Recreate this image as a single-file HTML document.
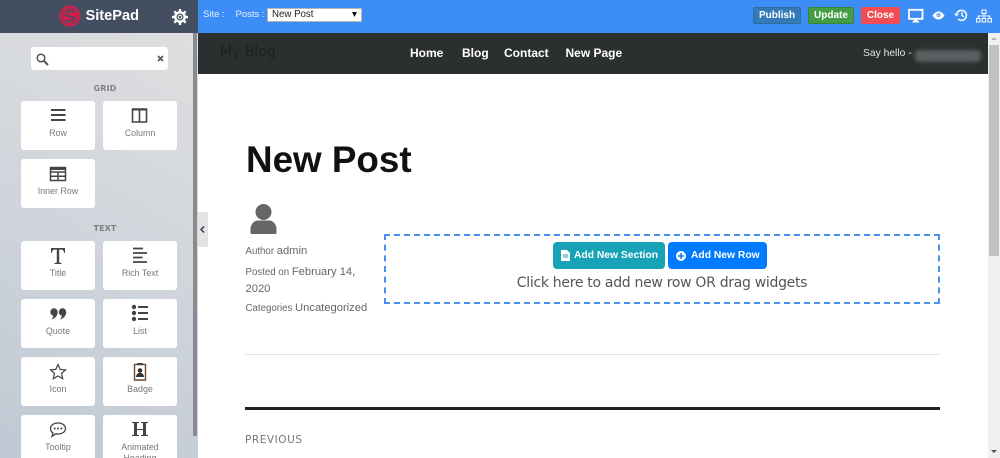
<!DOCTYPE html>
<html><head><meta charset="utf-8"><style>
html,body{margin:0;padding:0;width:1000px;height:458px;overflow:hidden;background:#fff}
*{box-sizing:border-box}
.a{position:absolute;white-space:nowrap}
body{font-family:"Liberation Sans","DejaVu Sans",sans-serif;position:relative}
#side{position:absolute;left:0;top:33px;width:198px;height:425px;background:linear-gradient(30deg,#bfc8d3 0%,#d0d5dc 50%,#dededf 100%)}
.card{position:absolute;width:74px;height:49px;background:#fff;border-radius:3px}
.card span{position:absolute;left:0;right:0;text-align:center;top:27px;font:8.900px/11px "Liberation Sans",sans-serif;color:#777;white-space:nowrap}
.card svg{position:absolute;left:25px;top:5px}
.sec{position:absolute;left:0;width:210px;text-align:center;font:bold 8px/10px "DejaVu Sans",sans-serif;color:#808080;letter-spacing:.1px}
.btn{position:absolute;top:7px;height:17px;border-radius:2px;color:#fff;font:bold 10px/16px "Liberation Sans",sans-serif;text-align:center}
.nav{position:absolute;top:46px;color:#fff;font:bold 12px/15px "Liberation Sans",sans-serif;white-space:nowrap}
.g{color:#666;font:9.700px/14px "Liberation Sans",sans-serif;white-space:nowrap;position:absolute}
.g b{font-weight:normal;font-size:11.200px}
</style></head><body>
<div class="a" style="left:0;top:0;width:198px;height:33px;background:#434f60"></div>
<svg class="a" style="left:59px;top:5px" width="22" height="22" viewBox="0 0 22 22"><circle cx="11" cy="11" r="10.500" fill="#d81b4a"/><path d="M15.500 7.500C13 5 7 5.500 6.800 9c-.2 3.500 8.400 1.500 8.400 4.500 0 3-5.700 3.500-8.700 1.200" fill="none" stroke="#434f60" stroke-width="1.700"/><circle cx="11" cy="11" r="8" fill="none" stroke="#434f60" stroke-width=".8"/></svg>
<div class="a" style="left:85.500px;top:6px;font:bold 14.600px/20px 'Liberation Sans',sans-serif;color:#fff">SitePad</div>
<svg class="a" style="left:171.500px;top:9px" width="16" height="16" viewBox="0 0 16 16"><circle cx="8" cy="8" r="4.700" fill="none" stroke="#fff" stroke-width="2.400"/><circle cx="8" cy="8" r="1.800" fill="none" stroke="#fff" stroke-width="1"/><g stroke="#fff" stroke-width="2.400"><path d="M8 0v3M8 13v3M0 8h3M13 8h3M2.300 2.300l2.100 2.100M11.600 11.600l2.100 2.100M13.700 2.300l-2.100 2.100M4.400 11.600l-2.100 2.100"/></g></svg>

<div class="a" style="left:198px;top:0;width:802px;height:33px;background:#3c8df5"></div>
<div class="a" style="left:203px;top:9px;font:9.500px/12px 'Liberation Sans',sans-serif;color:#e8f0ff">Site :</div>
<div class="a" style="left:235.500px;top:9px;font:9.500px/12px 'Liberation Sans',sans-serif;color:#e8f0ff">Posts :</div>
<div class="a" style="left:267px;top:8px;width:95px;height:14px;background:#fff;border:1px solid #b5b5b5;font:9.700px/12px 'Liberation Sans',sans-serif;color:#222;padding-left:4px">New Post<svg class="a" style="left:84px;top:3px" width="5" height="5"><path d="M0 0h5L2.500 5z" fill="#111"/></svg></div>
<div class="btn" style="left:753px;width:48px;background:#337ab7;border:1px solid #2e6da4;">Publish</div>
<div class="btn" style="left:808px;width:46px;background:#449d44;border:1px solid #398439">Update</div>
<div class="btn" style="left:861px;width:39px;background:#f04d53;line-height:17px">Close</div>
<svg class="a" style="left:908px;top:8px" width="16" height="16" viewBox="0 0 16 16"><path d="M1 1.800h13.500v9H1z" fill="none" stroke="#fff" stroke-width="1.800"/><path d="M6 11h3.500v2.500H6zM4.500 13h6.500v1.500H4.500z" fill="#fff"/></svg>
<svg class="a" style="left:932px;top:10px" width="13" height="11" viewBox="0 0 13 11"><path d="M.5 5.500C3 2 5 1.500 6.500 1.500s3.500.5 6 4c-2.500 3.500-4.500 4-6 4s-3.500-.5-6-4z" fill="#fff"/><circle cx="6.500" cy="5" r="2.300" fill="#8db8f5"/></svg>
<svg class="a" style="left:954px;top:8px" width="14" height="14" viewBox="0 0 14 14"><path d="M3 5a5 5 0 1 1 1 6" fill="none" stroke="#fff" stroke-width="1.500"/><path d="M0 5.500h5L2.500 8.500z" fill="#fff"/><path d="M8 4v3.500l2 1.200" fill="none" stroke="#fff" stroke-width="1.300"/></svg>
<svg class="a" style="left:976px;top:9px" width="16" height="14" viewBox="0 0 16 14"><path d="M6 1h4v3.500H6zM.5 9.500h3.500V13H.5zM6.200 9.500h3.500V13H6.200zM12 9.500h3.500V13H12z" fill="none" stroke="#fff" stroke-width="1"/><path d="M8 4.500v5M2.200 9.500V7h11.600v2.500" fill="none" stroke="#fff" stroke-width="1"/></svg>

<div class="a" style="left:198px;top:33px;width:790px;height:41px;background:#2b2f30"></div>
<div class="a" style="left:220px;top:43px;font:14px/18px 'DejaVu Sans',sans-serif;color:#1e2122">My Blog</div>
<div class="nav" style="left:410px">Home</div>
<div class="nav" style="left:462px">Blog</div>
<div class="nav" style="left:504px">Contact</div>
<div class="nav" style="left:565.500px">New Page</div>
<div class="a" style="left:915px;top:50px;width:66px;height:12px;background:#5c6061;filter:blur(2px);border-radius:4px"></div>
<div class="a" style="left:863px;top:46px;font:10.300px/15px 'Liberation Sans',sans-serif;color:#e4e4e4">Say hello -</div>

<div class="a" style="left:988px;top:33px;width:12px;height:425px;background:#f0f0f0"></div>
<div class="a" style="left:989px;top:45px;width:10px;height:211px;background:#c1c1c1"></div>
<svg class="a" style="left:991px;top:37px" width="6" height="4"><path d="M3 0l3 3H0z" fill="#b5b5b5"/></svg>
<svg class="a" style="left:991px;top:450px" width="6" height="4"><path d="M0 0h6L3 3z" fill="#505050"/></svg>

<div id="side"></div>
<div class="a" style="left:193px;top:33px;width:4px;height:403px;background:#888b8f"></div>
<div class="a" style="left:198px;top:212px;width:10px;height:35px;background:#e3e3e3"></div>
<svg class="a" style="left:200px;top:226px" width="5" height="7"><path d="M4 .5L1 3.500 4 6.500" fill="none" stroke="#334" stroke-width="1.400"/></svg>

<div class="a" style="left:31px;top:47px;width:137px;height:23px;background:#fff;border-radius:3px"></div>
<svg class="a" style="left:36px;top:53px" width="13" height="13" viewBox="0 0 13 13"><circle cx="5" cy="5" r="3.800" fill="none" stroke="#555" stroke-width="1.500"/><path d="M8 8l4 4" stroke="#555" stroke-width="2"/></svg>
<svg class="a" style="left:157px;top:55px" width="7" height="7"><path d="M1 1l5 5M6 1L1 6" stroke="#555" stroke-width="1.700"/></svg>

<div class="sec" style="top:84px">GRID</div>
<div class="sec" style="top:224px">TEXT</div>

<div class="card" style="left:21px;top:101px"><svg width="24" height="20" viewBox="0 0 24 20"><path d="M5 4h14.500M5 9h14.500M5 14h14.500" stroke="#444" stroke-width="2"/></svg><span>Row</span></div>
<div class="card" style="left:103px;top:101px"><svg width="24" height="20" viewBox="0 0 24 20"><path d="M4.500 3h14v13h-14zM11.500 3v13" fill="none" stroke="#444" stroke-width="1.600"/><path d="M4.500 2.500h14v2h-14z" fill="#444"/></svg><span>Column</span></div>
<div class="card" style="left:21px;top:159px"><svg width="24" height="20" viewBox="0 0 24 20"><path d="M4.500 3.500h15v13h-15zM4.500 8h15M4.500 12.200h15M12 8v8" fill="none" stroke="#444" stroke-width="1.500"/><path d="M4.500 3h15v3h-15z" fill="#444"/></svg><span>Inner Row</span></div>

<div class="card" style="left:21px;top:241px"><svg width="24" height="20" viewBox="0 0 24 20"><path d="M5 2h14v5h-.8c-.2-2-1-3.400-3-3.400h-2v12.400c0 .6.600 1 2.300 1V18H8.500v-1c1.700 0 2.300-.4 2.300-1V3.600h-2c-2 0-2.800 1.400-3 3.400H5z" fill="#444"/></svg><span>Title</span></div>
<div class="card" style="left:103px;top:241px"><svg width="24" height="20" viewBox="0 0 24 20"><path d="M5 2.500h10M5 7h14M5 11.500h9.500M5 16h14" stroke="#444" stroke-width="1.800"/></svg><span>Rich Text</span></div>
<div class="card" style="left:21px;top:299px"><svg width="24" height="20" viewBox="0 0 24 20"><circle cx="8" cy="8" r="3.700" fill="#444"/><circle cx="16.500" cy="8" r="3.700" fill="#444"/><path d="M11.700 8c0 3.600-2.400 6.500-6.200 7.500 1.500-1.800 2-3.500 2-5zM20.200 8c0 3.600-2.400 6.500-6.200 7.500 1.500-1.800 2-3.500 2-5z" fill="#444"/></svg><span>Quote</span></div>
<div class="card" style="left:103px;top:299px"><svg width="24" height="20" viewBox="0 0 24 20"><circle cx="6" cy="3" r="2.200" fill="#444"/><circle cx="6" cy="9" r="2.200" fill="#444"/><circle cx="6" cy="15" r="2.200" fill="#444"/><path d="M10 3h10M10 9h10M10 15h10" stroke="#444" stroke-width="2"/></svg><span>List</span></div>
<div class="card" style="left:21px;top:357px"><svg width="24" height="20" viewBox="0 0 24 20"><path d="M12 2.500l2.200 4.900 5.300.5-4 3.600 1.200 5.300L12 14l-4.700 2.800 1.200-5.300-4-3.600 5.300-.5z" fill="none" stroke="#444" stroke-width="1.200"/></svg><span>Icon</span></div>
<div class="card" style="left:103px;top:357px"><svg width="24" height="20" viewBox="0 0 24 20"><path d="M6.500 2.500h11v15.500h-11z" fill="none" stroke="#6b4a2e" stroke-width="1.400"/><path d="M9 1h6v2H9z" fill="#444"/><circle cx="12" cy="8.500" r="2.300" fill="#333"/><path d="M8 15c0-5.500 8-5.500 8 0z" fill="#333"/></svg><span>Badge</span></div>
<div class="card" style="left:21px;top:415px"><svg width="24" height="20" viewBox="0 0 24 20"><path d="M12 3c4.500 0 7.500 2.400 7.500 5.500S16.500 14 12 14c-.8 0-1.500-.1-2.200-.2L6 16.300l1-3.300C5.400 12 4.500 10.400 4.500 8.500 4.500 5.400 7.500 3 12 3z" fill="none" stroke="#444" stroke-width="1.300"/><circle cx="8.700" cy="8.500" r="1" fill="#444"/><circle cx="12" cy="8.500" r="1" fill="#444"/><circle cx="15.300" cy="8.500" r="1" fill="#444"/></svg><span>Tooltip</span></div>
<div class="card" style="left:103px;top:415px;height:43px;border-radius:3px 3px 0 0"><svg width="24" height="20" viewBox="0 0 24 20"><path d="M4 2h7v1l-2 .3V9h6V3.300L13 3V2h7v1l-2 .3v11.400l2 .3v1h-7v-1l2-.3v-4.700H9v4.700l2 .3v1H4v-1l2-.3V3.300L4 3z" fill="#444"/></svg><span>Animated<br>Heading</span></div>

<div class="a" style="left:246px;top:137px;font:bold 36.800px/46px 'Liberation Sans',sans-serif;color:#111">New Post</div>
<svg class="a" style="left:250px;top:204px" width="27" height="31" viewBox="0 0 27 31"><circle cx="13.500" cy="8" r="8" fill="#666"/><path d="M.5 29v-4c0-5 4-8.500 7-8.500h12c3 0 7 3.500 7 8.500v4c0 .5-.5 1-1 1H1.500c-.5 0-1-.5-1-1z" fill="#666"/></svg>
<div class="g" style="left:245.500px;top:244px">Author <b>admin</b></div>
<div class="g" style="left:245.500px;top:265px">Posted on <b>February 14,</b></div>
<div class="g" style="left:245.500px;top:282px;font-size:11.200px">2020</div>
<div class="g" style="left:245.500px;top:301px">Categories <b>Uncategorized</b></div>

<div class="a" style="left:384px;top:234px;width:556px;height:70px;border:2px dashed #4a90f0"></div>
<div class="a" style="left:553px;top:242px;width:112px;height:27px;background:#17a2b8;border-radius:4px;color:#fff;font:bold 10.300px/28px 'Liberation Sans',sans-serif;padding-left:21px">Add New Section</div>
<svg class="a" style="left:561px;top:250px" width="9" height="11"><path d="M0 0h6l3 3v8H0z" fill="#fff"/><path d="M2 5h5M2 7h5" stroke="#17a2b8"/></svg>
<div class="a" style="left:668px;top:242px;width:99px;height:27px;background:#007bff;border-radius:4px;color:#fff;font:bold 10.300px/28px 'Liberation Sans',sans-serif;padding-left:23px">Add New Row</div>
<svg class="a" style="left:676px;top:251px" width="10" height="10"><circle cx="5" cy="5" r="5" fill="#fff"/><path d="M5 2v6M2 5h6" stroke="#007bff" stroke-width="1.500"/></svg>
<div class="a" style="left:384px;width:556px;top:274px;text-align:center;font:14px/18px 'DejaVu Sans',sans-serif;color:#555;letter-spacing:-.3px">Click here to add new row OR drag widgets</div>

<div class="a" style="left:245px;top:354px;width:695px;height:1px;background:#e2e2e2"></div>
<div class="a" style="left:245px;top:407px;width:695px;height:3px;background:#222"></div>
<div class="a" style="left:245px;top:433px;font:10.500px/14px 'DejaVu Sans',sans-serif;color:#767676;letter-spacing:.55px">PREVIOUS</div>
</body></html>
